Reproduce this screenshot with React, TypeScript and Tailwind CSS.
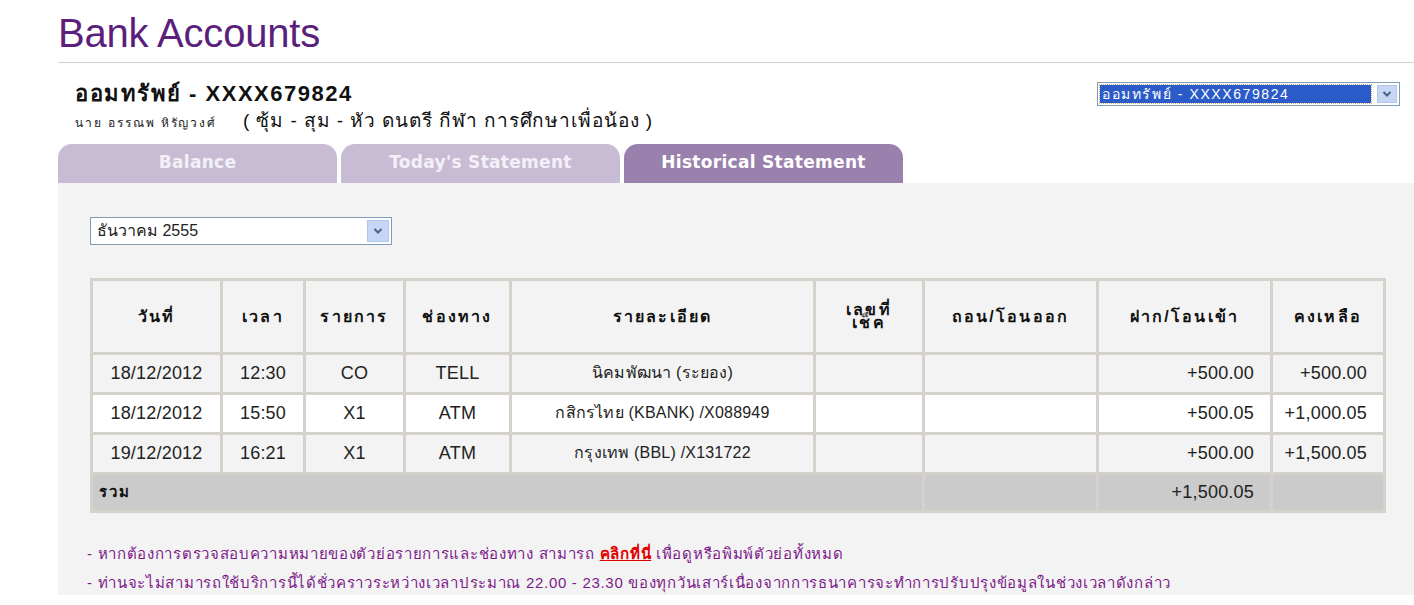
import React from 'react';

const rows = [
  { date: '18/12/2012', time: '12:30', code: 'CO', ch: 'TELL', desc: 'นิคมพัฒนา (ระยอง)', dep: '+500.00', bal: '+500.00', bg: 'bg-[#f3f3f3]' },
  { date: '18/12/2012', time: '15:50', code: 'X1', ch: 'ATM', desc: 'กสิกรไทย (KBANK) /X088949', dep: '+500.05', bal: '+1,000.05', bg: 'bg-white' },
  { date: '19/12/2012', time: '16:21', code: 'X1', ch: 'ATM', desc: 'กรุงเทพ (BBL) /X131722', dep: '+500.00', bal: '+1,500.05', bg: 'bg-[#f3f3f3]' },
];

function Chevron() {
  return (
    <svg width="10" height="8" viewBox="0 0 10 8">
      <path d="M1.5 2 L5 5.5 L8.5 2" fill="none" stroke="#4d6185" strokeWidth="2" />
    </svg>
  );
}

function Tab({ label, active }: { label: string; active?: boolean }) {
  return (
    <div
      className={
        'w-[279px] h-[39px] rounded-t-[14px] flex items-center justify-center text-[17px] font-bold tracking-[0.3px] ' +
        (active ? 'bg-[#9a80ad] text-white' : 'bg-[#c8bcd5] text-[#f4f0f7]')
      }
      style={{ fontFamily: '"DejaVu Sans", Verdana, sans-serif' }}
    >
      {label}
    </div>
  );
}

export default function App() {
  const thai = { fontFamily: 'Tahoma, "Liberation Sans", "Noto Sans", sans-serif' };
  const head = ['วันที่', 'เวลา', 'รายการ', 'ช่องทาง', 'รายละเอียด', 'เลขที่\nเช็ค', 'ถอน/โอนออก', 'ฝาก/โอนเข้า', 'คงเหลือ'];
  const num = ' h-[37px] flex items-center text-[18px] tracking-[0.2px]';

  return (
    <div className="w-[1414px] h-[605px] bg-white overflow-hidden" style={{ fontFamily: '"Liberation Sans", Arial, sans-serif' }}>
      <div className="pl-[58px]">
        <h1 className="pt-[11px] h-[62px] text-[40px] leading-[44px] text-[#5b1e7c] tracking-[-0.2px]">Bank Accounts</h1>
        <div className="h-px bg-[#d0d0d0]" />

        <div className="flex justify-between pt-[19px] pr-[14px]">
          <div className="pl-[17px]">
            <div className="text-[22px] leading-[24px] font-bold text-[#111] tracking-[1.5px]" style={thai}>ออมทรัพย์ - XXXX679824</div>
            <div className="flex items-baseline gap-[26px] mt-[1px]" style={thai}>
              <span className="text-[12px] text-[#222] tracking-[1.9px]">นาย อรรณพ หิรัญวงศ์</span>
              <span className="text-[19px] text-[#111] tracking-[0.9px]">( ซุ้ม - สุม - หัว ดนตรี กีฬา การศึกษาเพื่อน้อง )</span>
            </div>
          </div>
          <div className="w-[303px] h-[24px] border border-[#7f9db9] bg-white flex p-[2px]">
            <div className="flex-1 bg-[#2b5bc8] outline-1 outline-dotted outline-[#c7b07a] text-white text-[14px] leading-[18px] pl-[2px] tracking-[1.6px]" style={thai}>
              ออมทรัพย์ - XXXX679824
            </div>
            <div className="w-[20px] ml-[6px] bg-[#c6d6f5] border border-[#b3c6ea] flex items-center justify-center">
              <Chevron />
            </div>
          </div>
        </div>

        <div className="flex gap-[4px] mt-[8px]">
          <Tab label="Balance" />
          <Tab label="Today's Statement" />
          <Tab label="Historical Statement" active />
        </div>

        <div className="bg-[#f3f3f3] h-[412px] pl-[32px] pt-[34px]">
          <div className="w-[302px] h-[28px] border border-[#7f9db9] bg-white flex items-center pl-[6px] pr-[2px]">
            <span className="flex-1 text-[16px] text-[#222]" style={thai}>ธันวาคม 2555</span>
            <div className="w-[22px] h-[22px] bg-[#c6d6f5] border border-[#b3c6ea] flex items-center justify-center">
              <Chevron />
            </div>
          </div>

          <div className="mt-[33px] w-[1296px] grid grid-cols-[127px_80px_97px_103px_301px_106px_171px_171px_110px] gap-[3px] p-[3px] bg-[#d5d1cb] text-[#222]">
            {head.map((h, i) => (
              <div
                key={i}
                className="h-[71px] bg-[#f3f3f3] flex items-center justify-center text-center font-bold text-[16px] leading-[13px] tracking-[2.2px] text-[#111] whitespace-pre-line"
                style={thai}
              >
                {h}
              </div>
            ))}
            {rows.map((r, ri) => (
              <React.Fragment key={ri}>
                <div className={r.bg + num + ' justify-center'}>{r.date}</div>
                <div className={r.bg + num + ' justify-center'}>{r.time}</div>
                <div className={r.bg + num + ' justify-center'}>{r.code}</div>
                <div className={r.bg + num + ' justify-center'}>{r.ch}</div>
                <div className={r.bg + ' h-[37px] flex items-center justify-center text-[16px] tracking-[0.2px]'} style={thai}>{r.desc}</div>
                <div className={r.bg + ' h-[37px]'} />
                <div className={r.bg + ' h-[37px]'} />
                <div className={r.bg + num + ' justify-end pr-[16px]'}>{r.dep}</div>
                <div className={r.bg + num + ' justify-end pr-[16px]'}>{r.bal}</div>
              </React.Fragment>
            ))}
            <div className="col-span-6 h-[35px] bg-[#cbcbcb] flex items-center pl-[6px] font-bold text-[15px] tracking-[2px] text-[#111]" style={thai}>รวม</div>
            <div className="h-[35px] bg-[#cbcbcb]" />
            <div className="h-[35px] bg-[#cbcbcb] flex items-center justify-end pr-[16px] text-[18px] tracking-[0.2px]">+1,500.05</div>
            <div className="h-[35px] bg-[#cbcbcb]" />
          </div>

          <div className="mt-[26px] text-[15px] leading-[29px] text-[#7d1a8a] tracking-[0.7px]" style={thai}>
            <div className="-ml-[3px]">
              - หากต้องการตรวจสอบความหมายของตัวย่อรายการและช่องทาง สามารถ{' '}
              <a className="text-[#e00000] font-bold underline">คลิกที่นี่</a> เพื่อดูหรือพิมพ์ตัวย่อทั้งหมด
            </div>
            <div className="-ml-[3px]">
              - ท่านจะไม่สามารถใช้บริการนี้ได้ชั่วคราวระหว่างเวลาประมาณ 22.00 - 23.30 ของทุกวันเสาร์เนื่องจากการธนาคารจะทำการปรับปรุงข้อมูลในช่วงเวลาดังกล่าว
            </div>
          </div>
        </div>
      </div>
    </div>
  );
}
